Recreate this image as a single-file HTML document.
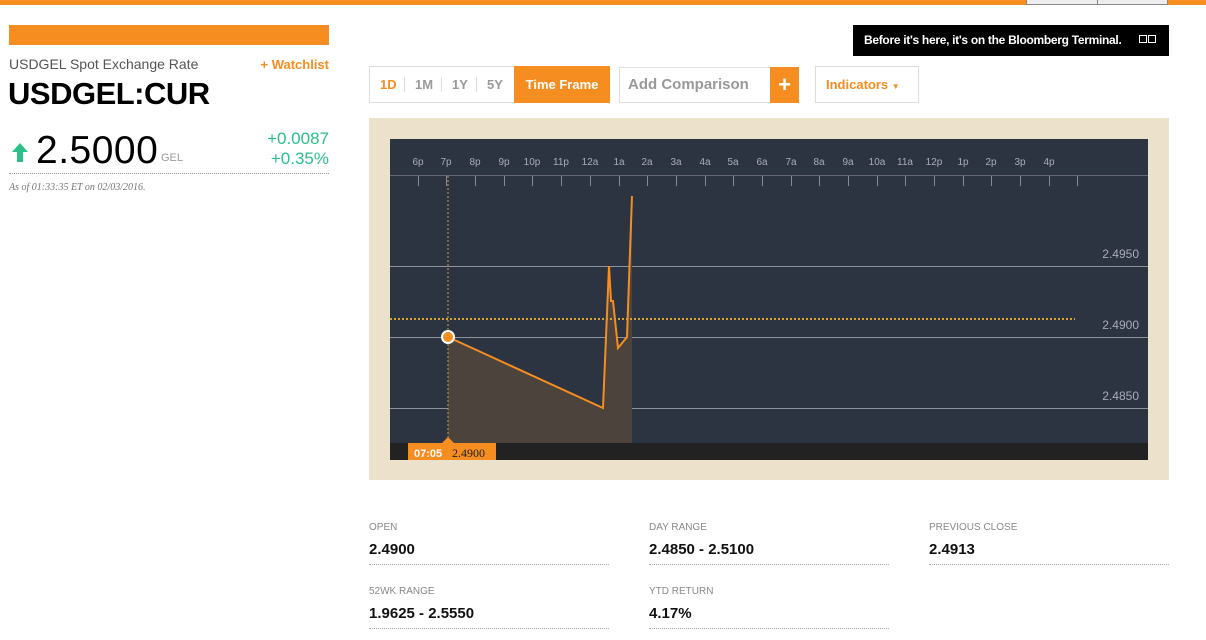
<!DOCTYPE html>
<html><head><meta charset="utf-8"><style>
*{margin:0;padding:0;box-sizing:border-box}
body{width:1206px;height:640px;background:#fff;font-family:"Liberation Sans",sans-serif;position:relative;overflow:hidden}
.a{position:absolute}
.lab{font-size:10px;color:#888}
.val{font-size:15px;font-weight:bold;color:#111}
.dl{border-bottom:1px dotted #aaa;width:240px}
</style></head><body>
<div class="a" style="left:0;top:0;width:1206px;height:5px;background:#f68d20"></div>
<div class="a" style="left:1026px;top:0;width:72px;height:5px;background:#eee;border:1px solid #888;border-top:0"></div>
<div class="a" style="left:1097px;top:0;width:71px;height:5px;background:#eee;border:1px solid #888;border-top:0"></div>

<div class="a" style="left:9px;top:25px;width:320px;height:20px;background:#f68d20"></div>
<div class="a" style="left:9px;top:56px;font-size:14px;color:#555">USDGEL Spot Exchange Rate</div>
<div class="a" style="left:229px;top:57px;width:100px;text-align:right;font-size:13px;color:#f68d20;font-weight:bold">+ Watchlist</div>
<div class="a" style="left:8px;top:76px;font-size:31px;font-weight:bold;color:#000;letter-spacing:-0.5px">USDGEL:CUR</div>
<svg class="a" style="left:10px;top:141px" width="20" height="22"><path d="M10 2 L18 11 H13 V21 H7 V11 H2 Z" fill="#2bbf8a"/></svg>
<div class="a" style="left:36px;top:129px;font-size:39px;color:#000;letter-spacing:0.5px">2.5000</div>
<div class="a" style="left:161px;top:152px;font-size:11px;color:#999">GEL</div>
<div class="a" style="left:229px;top:129px;width:100px;text-align:right;font-size:17px;color:#2bbf8a;line-height:20px">+0.0087<br>+0.35%</div>
<div class="a" style="left:9px;top:173px;width:320px;border-bottom:1px dotted #999"></div>
<div class="a" style="left:9px;top:182px;font-size:10px;color:#777;font-style:italic;font-family:'Liberation Serif',serif">As of 01:33:35 ET on 02/03/2016.</div>

<div class="a" style="left:853px;top:25px;width:316px;height:31px;background:#000;color:#fff;font-size:12px;font-weight:bold;line-height:31px;padding-left:11px;letter-spacing:-0.3px">Before it's here, it's on the Bloomberg Terminal.</div>
<div class="a" style="left:1139px;top:35px;width:8px;height:8px;border:1px solid #fff"></div>
<div class="a" style="left:1148px;top:35px;width:8px;height:8px;border:1px solid #fff"></div>

<div class="a" style="left:369px;top:66px;width:241px;height:37px;border:1px solid #ddd;font-size:13px;font-weight:bold;color:#999;line-height:35px">
<span class="a" style="left:10px;color:#f68d20">1D</span><span class="a" style="left:34px;top:10px;height:15px;border-left:1px solid #ddd"></span>
<span class="a" style="left:45px">1M</span><span class="a" style="left:71px;top:10px;height:15px;border-left:1px solid #ddd"></span>
<span class="a" style="left:82px">1Y</span><span class="a" style="left:106px;top:10px;height:15px;border-left:1px solid #ddd"></span>
<span class="a" style="left:117px">5Y</span>
<span class="a" style="left:144px;top:-1px;width:96px;height:37px;background:#f68d20;color:#fff;text-align:center;line-height:37px">Time Frame</span></div>
<div class="a" style="left:619px;top:67px;width:180px;height:36px;border:1px solid #ddd;font-size:15px;font-weight:bold;color:#999;line-height:34px;padding-left:8px">Add Comparison</div>
<div class="a" style="left:770px;top:67px;width:29px;height:36px;background:#f68d20;color:#fff;font-size:22px;font-weight:bold;text-align:center;line-height:35px">+</div>
<div class="a" style="left:815px;top:66px;width:104px;height:37px;border:1px solid #ddd;font-size:13px;font-weight:bold;color:#f68d20;line-height:35px;padding-left:10px">Indicators <span style="font-size:8px">▼</span></div>

<div class="a" style="left:369px;top:118px;width:800px;height:362px;background:#f6f0e0;background-image:radial-gradient(#cdb98c 0.6px,transparent 0.7px);background-size:2px 2px"></div>
<svg class="a" style="left:390px;top:139px" width="758" height="321">
<rect width="758" height="321" fill="#2c3442"/>
<g font-family="Liberation Sans" font-size="10" fill="#aab" text-anchor="middle">
<text x="28" y="26">6p</text><text x="56" y="26">7p</text><text x="85" y="26">8p</text><text x="114" y="26">9p</text><text x="142" y="26">10p</text><text x="171" y="26">11p</text><text x="200" y="26">12a</text><text x="229" y="26">1a</text><text x="257" y="26">2a</text><text x="286" y="26">3a</text><text x="315" y="26">4a</text><text x="343" y="26">5a</text><text x="372" y="26">6a</text><text x="401" y="26">7a</text><text x="429" y="26">8a</text><text x="458" y="26">9a</text><text x="487" y="26">10a</text><text x="515" y="26">11a</text><text x="544" y="26">12p</text><text x="573" y="26">1p</text><text x="601" y="26">2p</text><text x="630" y="26">3p</text><text x="659" y="26">4p</text>
</g>
<line x1="0" y1="36.5" x2="758" y2="36.5" stroke="#667" />
<g stroke="#889" stroke-width="1">
<path d="M28.5 37v10M56.5 37v10M85.5 37v10M114.5 37v10M142.5 37v10M171.5 37v10M200.5 37v10M229.5 37v10M257.5 37v10M286.5 37v10M315.5 37v10M343.5 37v10M372.5 37v10M401.5 37v10M429.5 37v10M458.5 37v10M487.5 37v10M515.5 37v10M544.5 37v10M573.5 37v10M601.5 37v10M630.5 37v10M659.5 37v10M687.5 37v10"/>
</g>
<g stroke="#8d929b"><line x1="0" y1="127.5" x2="758" y2="127.5"/><line x1="0" y1="198.5" x2="758" y2="198.5"/><line x1="0" y1="269.5" x2="758" y2="269.5"/></g>
<g font-family="Liberation Sans" font-size="12" fill="#aab" text-anchor="end"><text x="749" y="119">2.4950</text><text x="749" y="190">2.4900</text><text x="749" y="261">2.4850</text></g>
<path d="M58 198 L213 269 L219 127 L221 162 L223 162 L228 209 L237 198 L242 57 L242 304 L58 304Z" fill="#4b433c"/>
<line x1="0" y1="180" x2="685" y2="180" stroke="#e0a030" stroke-width="2" stroke-dasharray="2,2"/>
<line x1="58" y1="37" x2="58" y2="304" stroke="#c9a040" stroke-dasharray="2,2"/>
<path d="M58 198 L213 269 L219 127 L221 162 L223 162 L228 209 L237 198 L242 57" fill="none" stroke="#f68d20" stroke-width="2"/>
<circle cx="58" cy="198" r="6" fill="#f68d20" stroke="#fff" stroke-width="2"/>
<rect x="0" y="304" width="758" height="17" fill="#222"/>
<path d="M52 304 L58 298 L64 304Z" fill="#f68d20"/>
<rect x="18" y="304" width="88" height="17" fill="#f68d20"/>
<text x="24" y="318" font-family="Liberation Sans" font-size="11" font-weight="bold" fill="#fff">07:05</text>
<text x="62" y="318" font-family="Liberation Serif" font-size="12" fill="#222">2.4900</text>
</svg>

<div class="a lab" style="left:369px;top:522px">OPEN</div>
<div class="a val" style="left:369px;top:541px">2.4900</div>
<div class="a dl" style="left:369px;top:564px"></div>
<div class="a lab" style="left:649px;top:522px">DAY RANGE</div>
<div class="a val" style="left:649px;top:541px">2.4850 - 2.5100</div>
<div class="a dl" style="left:649px;top:564px"></div>
<div class="a lab" style="left:929px;top:522px">PREVIOUS CLOSE</div>
<div class="a val" style="left:929px;top:541px">2.4913</div>
<div class="a dl" style="left:929px;top:564px"></div>
<div class="a lab" style="left:369px;top:586px">52WK RANGE</div>
<div class="a val" style="left:369px;top:605px">1.9625 - 2.5550</div>
<div class="a dl" style="left:369px;top:628px"></div>
<div class="a lab" style="left:649px;top:586px">YTD RETURN</div>
<div class="a val" style="left:649px;top:605px">4.17%</div>
<div class="a dl" style="left:649px;top:628px"></div>
</body></html>
